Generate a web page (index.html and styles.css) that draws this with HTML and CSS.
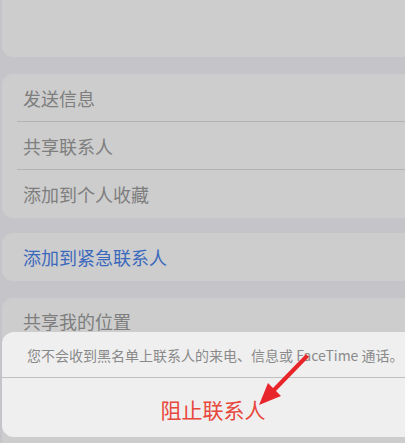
FILE: index.html
```html
<!DOCTYPE html>
<html lang="zh-CN">
<head>
<meta charset="utf-8">
<link rel="stylesheet" href="styles.css">
</head>
<body>
<div class="page">
  <div class="card card-top"></div>
  <div class="card group">
    <div class="row">发送信息</div>
    <div class="row">共享联系人</div>
    <div class="row">添加到个人收藏</div>
  </div>
  <div class="card group">
    <div class="row blue">添加到紧急联系人</div>
  </div>
  <div class="card group card-last">
    <div class="row">共享我的位置</div>
  </div>
</div>
<div class="sheet">
  <div class="sheet-msg">您不会收到黑名单上联系人的来电、信息或 FaceTime 通话。</div>
  <div class="sheet-btn">阻止联系人</div>
</div>
<svg class="arrow" width="405" height="443" viewBox="0 0 405 443">
  <polygon points="306,354 309,357 276,391 281,396 259,405 268,383 273,388" fill="#e8252a"/>
</svg>
</body>
</html>
```
FILE: styles.css
```css
html, body {
  margin: 0;
  padding: 0;
}
body {
  width: 405px;
  height: 443px;
  overflow: hidden;
  background: #c5c5c9;
  position: relative;
  font-family: "Noto Sans CJK SC", "Noto Sans", sans-serif;
}
.page {
  margin-left: 2px;
  width: 422px;
  display: flex;
  flex-direction: column;
}
.card {
  background: #cdcdcd;
  border-radius: 11px;
}
.card-top {
  margin-top: -20px;
  height: 77px;
}
.group {
  margin-top: 17px;
  padding-left: 15px;
}
.group + .group {
  margin-top: 15px;
}
.card-last {
  margin-top: 17px !important;
  height: 160px;
}
.row {
  height: 48px;
  line-height: 48px;
  padding-left: 6px;
  font-size: 18px;
  color: #7e7e7e;
  border-bottom: 1px solid #b3b3b3;
  box-sizing: border-box;
}
.row:last-child {
  border-bottom: none;
}
.card-last .row {
  height: 46px;
  line-height: 46px;
}
.blue {
  color: #3b69bd;
}
.sheet {
  position: absolute;
  top: 332px;
  left: 2px;
  width: 422px;
  height: 105px;
  background: #efefef;
  border-radius: 12px;
  display: flex;
  flex-direction: column;
}
.sheet-msg {
  height: 46px;
  line-height: 46px;
  font-size: 14px;
  color: #8a8a8a;
  border-bottom: 1px solid #c0c0c0;
  white-space: nowrap;
  box-sizing: border-box;
  margin-left: -2px;
  padding-left: 27px;
}
.sheet-btn {
  flex: 1;
  display: flex;
  align-items: center;
  justify-content: center;
  font-size: 21px;
  color: #e8473c;
  padding-top: 2px;
}
.arrow {
  position: absolute;
  left: 0;
  top: 0;
  pointer-events: none;
}
```
